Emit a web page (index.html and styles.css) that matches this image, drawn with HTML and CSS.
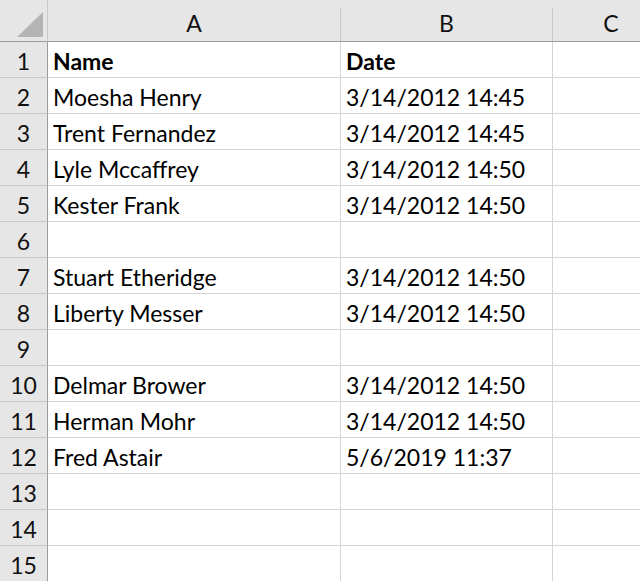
FILE: index.html
```html
<!DOCTYPE html>
<html>
<head>
<meta charset="utf-8">
<link rel="stylesheet" href="styles.css">
</head>
<body>
<div class="sheet">
  <div class="corner"><svg class="tri" width="27" height="26" viewBox="0 0 27 26"><polygon points="26,0 26,25 0,25" fill="#b4b4b4"/></svg></div>
  <div class="colhead"><div class="ch">A</div></div>
  <div class="colhead"><div class="ch">B</div></div>
  <div class="colhead last"><div class="ch">C</div></div>

  <div class="rh">1</div><div class="c a b">Name</div><div class="c b">Date</div><div class="c last"></div>
  <div class="rh">2</div><div class="c">Moesha Henry</div><div class="c">3/14/2012 14:45</div><div class="c last"></div>
  <div class="rh">3</div><div class="c">Trent Fernandez</div><div class="c">3/14/2012 14:45</div><div class="c last"></div>
  <div class="rh">4</div><div class="c">Lyle Mccaffrey</div><div class="c">3/14/2012 14:50</div><div class="c last"></div>
  <div class="rh">5</div><div class="c">Kester Frank</div><div class="c">3/14/2012 14:50</div><div class="c last"></div>
  <div class="rh">6</div><div class="c"></div><div class="c"></div><div class="c last"></div>
  <div class="rh">7</div><div class="c">Stuart Etheridge</div><div class="c">3/14/2012 14:50</div><div class="c last"></div>
  <div class="rh">8</div><div class="c">Liberty Messer</div><div class="c">3/14/2012 14:50</div><div class="c last"></div>
  <div class="rh">9</div><div class="c"></div><div class="c"></div><div class="c last"></div>
  <div class="rh">10</div><div class="c">Delmar Brower</div><div class="c">3/14/2012 14:50</div><div class="c last"></div>
  <div class="rh">11</div><div class="c">Herman Mohr</div><div class="c">3/14/2012 14:50</div><div class="c last"></div>
  <div class="rh">12</div><div class="c">Fred Astair</div><div class="c">5/6/2019 11:37</div><div class="c last"></div>
  <div class="rh">13</div><div class="c"></div><div class="c"></div><div class="c last"></div>
  <div class="rh">14</div><div class="c"></div><div class="c"></div><div class="c last"></div>
  <div class="rh">15</div><div class="c"></div><div class="c"></div><div class="c last"></div>
</div>
</body>
</html>
```
FILE: styles.css
```css
html, body {
  margin: 0;
  padding: 0;
  background: #fff;
  overflow: hidden;
}
.sheet {
  display: grid;
  grid-template-columns: 48px 293px 212px 116px;
  grid-template-rows: 42px repeat(15, 36px);
  width: 669px;
  font-family: Lato, "Open Sans", sans-serif;
  font-size: 23px;
  color: #000;
}
.corner {
  background: #e6e6e6;
  border-bottom: 1px solid #9b9b9b;
  border-right: 1px solid #c8c8c8;
  box-sizing: border-box;
  display: flex;
  align-items: flex-start;
  justify-content: flex-end;
  padding: 12px 3px 0 0;
}
.tri { display: block; }
.colhead {
  background: #e6e6e6;
  border-bottom: 1px solid #9b9b9b;
  box-sizing: border-box;
  padding-top: 8px;
  display: flex;
}
.ch {
  flex: 1;
  border-right: 1px solid #c8c8c8;
  text-align: center;
  line-height: 26px;
  padding-top: 2px;
  color: #111;
}
.colhead.last .ch { border-right: none; }
.rh {
  background: #e6e6e6;
  border-right: 1px solid #9b9b9b;
  border-bottom: 1px solid #c8c8c8;
  box-sizing: border-box;
  display: flex;
  align-items: flex-end;
  justify-content: center;
  padding-bottom: 3px;
  line-height: 26px;
  color: #111;
}
.c {
  border-right: 1px solid #d4d4d4;
  border-bottom: 1px solid #d4d4d4;
  box-sizing: border-box;
  display: flex;
  align-items: flex-end;
  padding: 0 0 3px 5px;
  line-height: 26px;
  white-space: nowrap;
}
.c.last { border-right: none; }
.b { font-weight: bold; }
```
